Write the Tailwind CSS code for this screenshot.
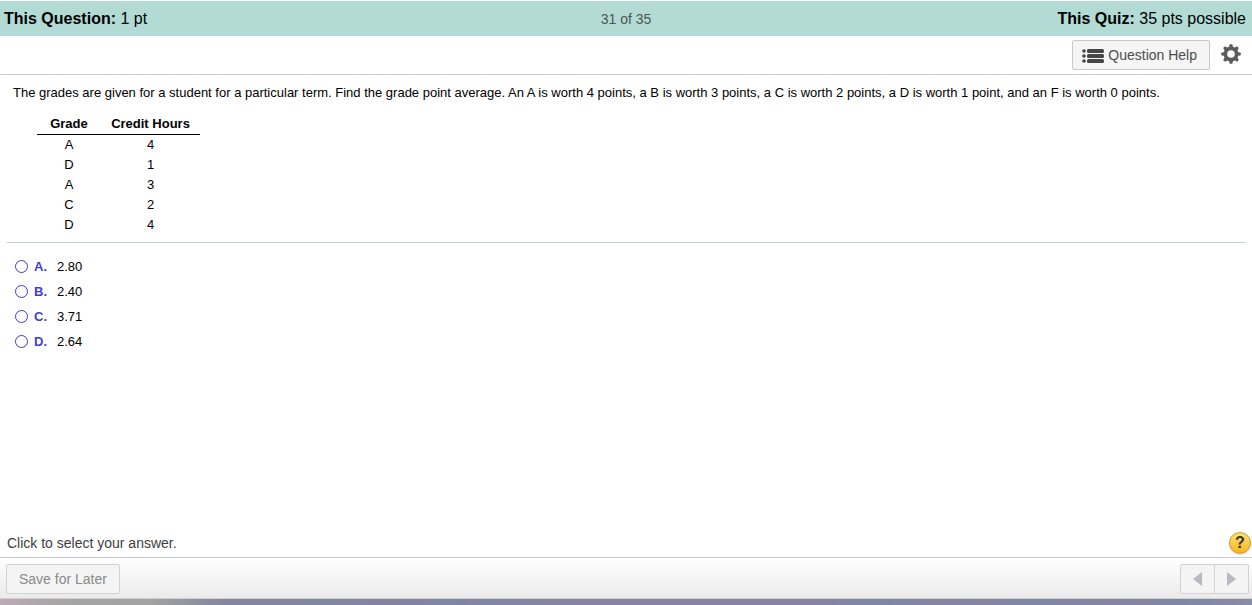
<!DOCTYPE html>
<html lang="en">
<head>
  <meta charset="UTF-8" />
  <meta name="viewport" content="width=device-width, initial-scale=1.0" />
  <title>Quiz</title>
  <script src="https://cdn.jsdelivr.net/npm/@tailwindcss/browser@4"></script>
</head>
<body class="bg-white min-h-screen flex flex-col text-black text-[13px] font-['Liberation_Sans',Arial,sans-serif]">

  <!-- Quiz status -->
  <header class="grid grid-cols-3 items-center h-9 px-1 border-t border-white bg-[#b2dbd5] text-base">
    <p><b>This Question:</b> 1 pt</p>
    <p class="text-center text-sm text-[#4c5654]">31 of 35</p>
    <p class="text-right pr-0.5"><b>This Quiz:</b> 35 pts possible</p>
  </header>

  <!-- Toolbar -->
  <div class="flex items-center justify-end gap-[11px] h-[39px] pr-[11px] border-b border-[#c6cbdc]">
    <button type="button" class="flex items-center gap-1 h-[30px] pl-[9px] pr-3 border border-[#c9c9c9] rounded-xs bg-[#f5f5f5] text-sm text-[#4d4d4d]">
      <svg class="w-[22px] h-4" viewBox="0 0 22 16" fill="#444" aria-hidden="true">
        <circle cx="2" cy="4" r="1.8" /><circle cx="2" cy="9" r="1.8" /><circle cx="2" cy="14" r="1.8" />
        <rect x="5" y="2" width="17" height="4" rx="1.5" />
        <rect x="5" y="7" width="17" height="4" rx="1.5" />
        <rect x="5" y="12" width="17" height="4" rx="1.5" />
      </svg>
      Question Help
    </button>
    <button type="button" class="pb-0.5" aria-label="Settings">
      <svg class="w-5 h-5" viewBox="-10 -10 20 20" fill="#5c5c5c" aria-hidden="true">
        <circle r="5.6" fill="none" stroke="#5c5c5c" stroke-width="3.6" />
        <path id="tooth" d="M-2.1-6.5L-1.3-9.8H1.3L2.1-6.5Z" />
        <use href="#tooth" transform="rotate(45)" />
        <use href="#tooth" transform="rotate(90)" />
        <use href="#tooth" transform="rotate(135)" />
        <use href="#tooth" transform="rotate(180)" />
        <use href="#tooth" transform="rotate(225)" />
        <use href="#tooth" transform="rotate(270)" />
        <use href="#tooth" transform="rotate(315)" />
      </svg>
    </button>
  </div>

  <!-- Question -->
  <main class="flex-1 px-[7px] leading-5">
    <section class="pt-2 pb-[7px] pl-1.5 border-b border-[#c6cfe0]">
      <p>The grades are given for a student for a particular term. Find the grade point average. An A is worth 4 points, a B is worth 3 points, a C is worth 2 points, a D is worth 1 point, and an F is worth 0 points.</p>
      <table class="mt-[11px] ml-6 text-center border-collapse">
        <thead>
          <tr class="border-b border-black">
            <th class="w-16">Grade</th>
            <th class="w-[99px]">Credit Hours</th>
          </tr>
        </thead>
        <tbody>
          <tr><td>A</td><td>4</td></tr>
          <tr><td>D</td><td>1</td></tr>
          <tr><td>A</td><td>3</td></tr>
          <tr><td>C</td><td>2</td></tr>
          <tr><td>D</td><td>4</td></tr>
        </tbody>
      </table>
    </section>

    <fieldset class="flex flex-col items-start gap-[5px] pt-3.5 pl-2" aria-label="Grade point average">
      <label class="flex items-center">
        <input type="radio" name="answer" value="A" class="appearance-none size-[13px] mb-px border border-[#3b3bd6] rounded-full checked:bg-[#3b3bd6]" />
        <b class="w-[23px] ml-1.5 text-[#3f3fce]">A.</b>2.80
      </label>
      <label class="flex items-center">
        <input type="radio" name="answer" value="B" class="appearance-none size-[13px] mb-px border border-[#3b3bd6] rounded-full checked:bg-[#3b3bd6]" />
        <b class="w-[23px] ml-1.5 text-[#3f3fce]">B.</b>2.40
      </label>
      <label class="flex items-center">
        <input type="radio" name="answer" value="C" class="appearance-none size-[13px] mb-px border border-[#3b3bd6] rounded-full checked:bg-[#3b3bd6]" />
        <b class="w-[23px] ml-1.5 text-[#3f3fce]">C.</b>3.71
      </label>
      <label class="flex items-center">
        <input type="radio" name="answer" value="D" class="appearance-none size-[13px] mb-px border border-[#3b3bd6] rounded-full checked:bg-[#3b3bd6]" />
        <b class="w-[23px] ml-1.5 text-[#3f3fce]">D.</b>2.64
      </label>
    </fieldset>
  </main>

  <!-- Hint -->
  <div class="flex items-center justify-between pl-[7px] pr-px pb-[3px] text-sm text-[#404040]">
    <p>Click to select your answer.</p>
    <button type="button" class="size-[22px] rounded-full border border-[#cf9a22] bg-linear-to-b from-[#ffe06a] to-[#f8b51c] shadow-sm text-base leading-5 font-bold text-[#333]" aria-label="Help">?</button>
  </div>

  <!-- Navigation -->
  <footer class="border-t border-[#c6cbdc]">
    <div class="flex items-center justify-between h-[41px] pt-0.5 pl-1.5 pr-[3px] border-b border-[#d0d0d0] bg-linear-to-b from-white to-[#ebebeb]">
      <button type="button" class="h-[30px] px-3 border border-[#d2d2d2] rounded-xs bg-[#f4f4f4] text-sm text-[#8a8a8a]">Save for Later</button>
      <div class="flex h-[30px] border border-[#d2d2d2] rounded-xs bg-[#f4f4f4]">
        <button type="button" class="flex items-center justify-center w-[34px] border-r border-[#d2d2d2]" aria-label="Previous">
          <svg class="w-[9px] h-3.5" viewBox="0 0 9 14" fill="#b9babf" aria-hidden="true"><path d="M9 0V14L0 7Z" /></svg>
        </button>
        <button type="button" class="flex items-center justify-center w-[33px]" aria-label="Next">
          <svg class="w-[9px] h-3.5" viewBox="0 0 9 14" fill="#b9babf" aria-hidden="true"><path d="M0 0V14L9 7Z" /></svg>
        </button>
      </div>
    </div>
    <div class="h-1.5 bg-[linear-gradient(90deg,#bbaab8_0%,#a5a5a5_5%,#a2a2a2_12%,#80889e_18%,#80889e_25%,#8482a0_31%,#7d86a5_35%,#8783a0_47%,#8783a0_65%,#7d86a5_70%,#8783a0_77%,#7d86a5_83%,#8783a0_90%,#7d86a5_94%,#868da3_100%)]"></div>
  </footer>

</body>
</html>
